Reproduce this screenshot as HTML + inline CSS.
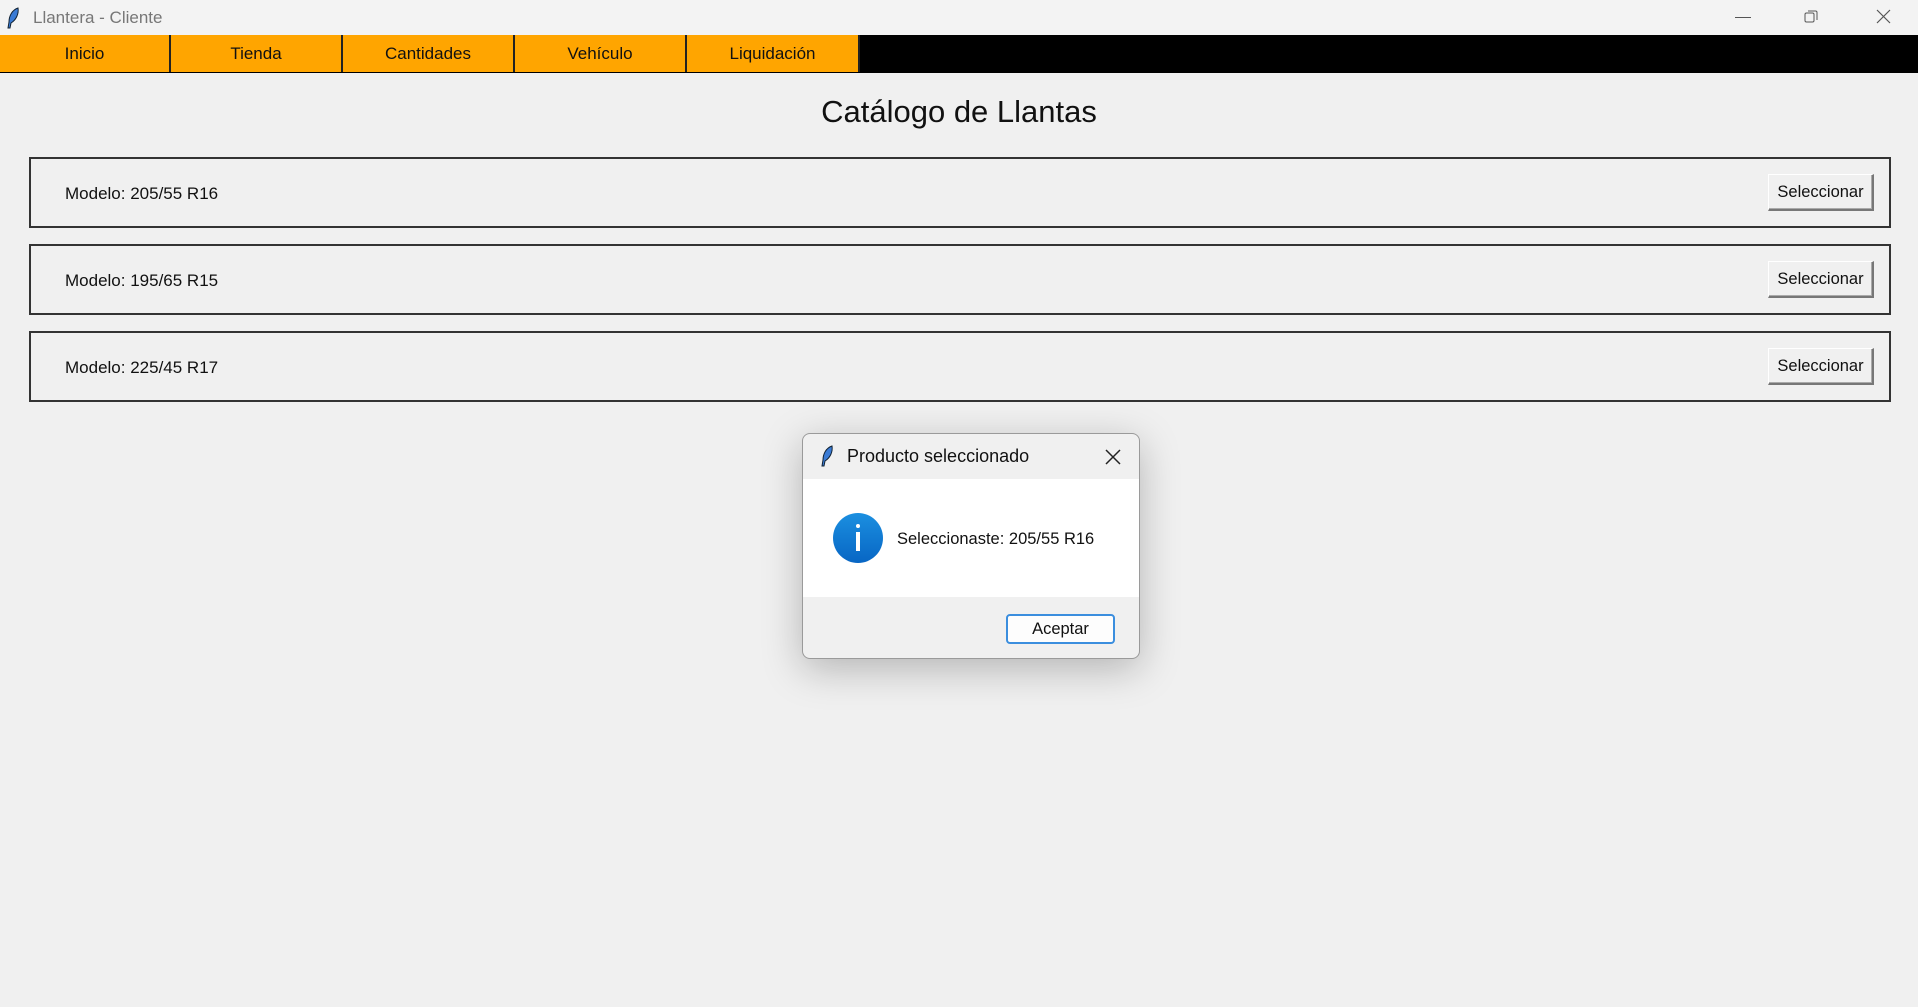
<!DOCTYPE html>
<html><head><meta charset="utf-8"><style>
*{margin:0;padding:0;box-sizing:border-box}
body{width:1918px;height:1007px;background:#f0f0f0;font-family:"Liberation Sans",sans-serif;position:relative;overflow:hidden}
.abs{position:absolute}
.tb{left:0;top:0;width:1918px;height:35px;background:#f3f3f3}
.menu{left:0;top:35px;width:1918px;height:38px;background:#000}
.mb{position:absolute;top:0;height:37px;background:#ffa500;border-right:2px solid #222;font-size:17px;color:#111;text-align:center;line-height:38px}
.row{position:absolute;left:29px;width:1862px;height:71px;border:2px solid #333}
.row .t{position:absolute;left:34px;top:25px;font-size:17px;color:#111}
.row .b{position:absolute;right:15px;top:15px;width:106px;height:37px;background:#f0f0f0;border:1px solid #fff;border-right:2px solid #777;border-bottom:2px solid #777;box-shadow:inset -1px -1px 0 #aaa;font-size:16.5px;text-align:center;line-height:35px;color:#111}
.dlg{left:802px;top:433px;width:338px;height:226px;border:1px solid #9a9a9a;border-radius:8px;background:#f0f0f0;box-shadow:0 10px 40px rgba(0,0,0,.25);overflow:hidden}
</style></head><body>
<div class="abs tb">
<svg class="abs" style="left:6px;top:7px" width="14" height="22" viewBox="0 0 14 22"><path d="M12 1C6 3 3 9 3 15L2 21L4 21L5 16C10 13 13 7 12 1Z" fill="#3a7bd5" stroke="#123" stroke-width="1"/></svg>
<div class="abs" style="left:33px;top:8px;font-size:17px;color:#777">Llantera - Cliente</div>
<div class="abs" style="left:1735px;top:17px;width:16px;height:1px;background:#555"></div>
<svg class="abs" style="left:1804px;top:10px" width="14" height="14" viewBox="0 0 14 14"><rect x="1" y="3" width="9" height="9" rx="1.5" fill="none" stroke="#555"/><path d="M4 1H11.5Q13 1 13 2.5V10" fill="none" stroke="#555"/></svg>
<svg class="abs" style="left:1876px;top:9px" width="15" height="15" viewBox="0 0 15 15"><path d="M1 1L14 14M14 1L1 14" stroke="#555" stroke-width="1.2"/></svg>
</div>
<div class="abs menu">
<div class="mb" style="left:0;width:171px">Inicio</div>
<div class="mb" style="left:171px;width:172px">Tienda</div>
<div class="mb" style="left:343px;width:172px">Cantidades</div>
<div class="mb" style="left:515px;width:172px">Vehículo</div>
<div class="mb" style="left:687px;width:173px">Liquidación</div>
</div>
<div class="abs" style="left:0;top:94px;width:1918px;text-align:center;font-size:31px;color:#111">Catálogo de Llantas</div>
<div class="row" style="top:157px"><div class="t">Modelo: 205/55 R16</div><div class="b">Seleccionar</div></div>
<div class="row" style="top:244px"><div class="t">Modelo: 195/65 R15</div><div class="b">Seleccionar</div></div>
<div class="row" style="top:331px"><div class="t">Modelo: 225/45 R17</div><div class="b">Seleccionar</div></div>
<div class="abs dlg">
<svg class="abs" style="left:17px;top:11px" width="14" height="22" viewBox="0 0 14 22"><path d="M12 1C6 3 3 9 3 15L2 21L4 21L5 16C10 13 13 7 12 1Z" fill="#3a7bd5" stroke="#123" stroke-width="1"/></svg>
<div class="abs" style="left:44px;top:12px;font-size:18px;color:#111">Producto seleccionado</div>
<svg class="abs" style="left:302px;top:15px" width="16" height="16" viewBox="0 0 16 16"><path d="M1 1L15 15M15 1L1 15" stroke="#222" stroke-width="1.5"/></svg>
<div class="abs" style="left:0;top:45px;width:338px;height:118px;background:#fff"></div>
<div class="abs" style="left:30px;top:79px;width:50px;height:50px;border-radius:50%;background:linear-gradient(#1b8fe0,#0866c4)"></div>
<div class="abs" style="left:53px;top:90px;width:4px;height:4px;background:#fff;border-radius:2px"></div>
<div class="abs" style="left:53px;top:98px;width:4px;height:19px;background:#fff"></div>
<div class="abs" style="left:94px;top:96px;font-size:16.5px;color:#111">Seleccionaste: 205/55 R16</div>
<div class="abs" style="left:203px;top:180px;width:109px;height:30px;border:2px solid #3b8ede;border-radius:4px;background:#fdfdfd;font-size:16.5px;text-align:center;line-height:27px;color:#111">Aceptar</div>
</div>
</body></html>
